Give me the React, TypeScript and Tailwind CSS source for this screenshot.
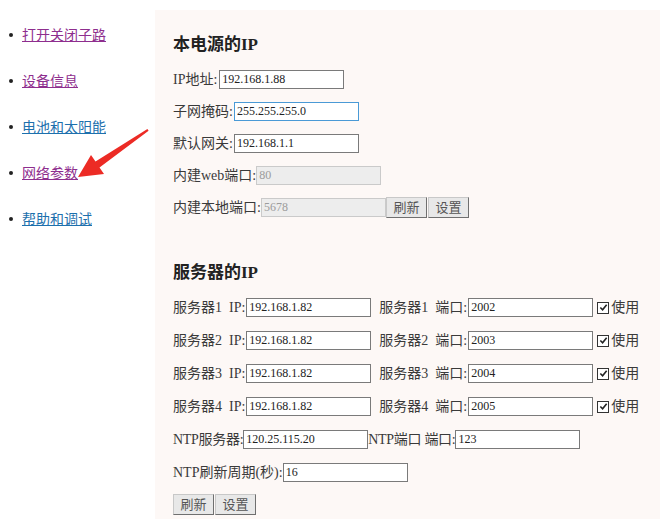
import React from "react";

const font = "font-['Liberation_Serif','Noto_Sans_CJK_SC',serif]";

const navItems = [
  { label: "打开关闭子路", visited: true },
  { label: "设备信息", visited: true },
  { label: "电池和太阳能", visited: false },
  { label: "网络参数", visited: true },
  { label: "帮助和调试", visited: false },
];

const servers = [
  { n: 1, ip: "192.168.1.82", port: "2002" },
  { n: 2, ip: "192.168.1.82", port: "2003" },
  { n: 3, ip: "192.168.1.82", port: "2004" },
  { n: 4, ip: "192.168.1.82", port: "2005" },
];

interface FieldProps {
  value: string;
  disabled?: boolean;
  focused?: boolean;
}

const Field = ({ value, disabled, focused }: FieldProps) => {
  let tone = "border-[#7a7a7a] bg-white text-[#222]";
  if (disabled) tone = "border-[#cacaca] bg-[#ededed] text-[#9c9c9c]";
  if (focused) tone = "border-[#4a9ad6] bg-white text-[#222]";
  return (
    <input
      defaultValue={value}
      disabled={disabled}
      className={`h-[19px] w-[125px] border px-[2px] text-[12px] outline-none ${tone} ${font}`}
    />
  );
};

const Btn = ({ label }: { label: string }) => (
  <button className="h-[21px] w-[41px] border border-t-[#c8c8c8] border-l-[#c8c8c8] border-r-[#6f6f6f] border-b-[#6f6f6f] bg-[#e8e8e8] text-[13px] text-[#555]">
    {label}
  </button>
);

const Check = () => (
  <span className="flex items-center gap-[2px]">
    <span className="flex h-[12px] w-[12px] items-center justify-center border border-[#333] bg-white">
      <svg viewBox="0 0 10 10" className="h-[9px] w-[9px]">
        <path d="M1.5 5 L4 7.5 L8.5 2" fill="none" stroke="#222" strokeWidth="1.8" />
      </svg>
    </span>
    <span>使用</span>
  </span>
);

const App = () => {
  return (
    <div className={`relative flex min-h-screen bg-white text-[14px] text-[#3a3a3a] ${font}`}>
      {/* left nav */}
      <ul className="flex w-[155px] shrink-0 flex-col gap-[26px] pt-[25px]">
        {navItems.map((item) => (
          <li key={item.label} className="flex h-[20px] items-center">
            <span className="ml-[9px] mr-[9px] h-[4px] w-[4px] rounded-full bg-[#222]" />
            <a
              href="#"
              className={`underline ${item.visited ? "text-[#8e2e8e]" : "text-[#1d70ad]"}`}
            >
              {item.label}
            </a>
          </li>
        ))}
      </ul>

      {/* main panel */}
      <div className="mt-[10px] flex-1 bg-[#fdf8f6] pl-[18px] pb-[20px]">
        <h2 className="mt-[19px] flex h-[32px] items-center text-[17px] font-bold text-[#222]">本电源的IP</h2>
        <div className="mt-[2px] flex flex-col">
          <div className="flex h-[32px] items-center">
            <span className="mr-[2px]">IP地址:</span>
            <Field value="192.168.1.88" />
          </div>
          <div className="flex h-[32px] items-center">
            <span className="mr-[1px]">子网掩码:</span>
            <Field value="255.255.255.0" focused />
          </div>
          <div className="flex h-[32px] items-center">
            <span className="mr-[1px]">默认网关:</span>
            <Field value="192.168.1.1" />
          </div>
          <div className="flex h-[32px] items-center">
            <span>内建web端口:</span>
            <Field value="80" disabled />
          </div>
          <div className="flex h-[32px] items-center">
            <span>内建本地端口:</span>
            <Field value="5678" disabled />
            <Btn label="刷新" />
            <span className="w-[1px]" />
            <Btn label="设置" />
          </div>
        </div>

        <h2 className="mt-[34px] flex h-[32px] items-center text-[17px] font-bold text-[#222]">服务器的IP</h2>
        <div className="mt-[2px] flex flex-col">
          {servers.map((s) => (
            <div key={s.n} className="flex h-[33px] items-center">
              <span className="mr-[1px]">服务器{s.n}&nbsp;&nbsp;IP:</span>
              <Field value={s.ip} />
              <span className="ml-[8px] mr-[1px]">服务器{s.n}&nbsp;&nbsp;端口:</span>
              <Field value={s.port} />
              <span className="ml-[4px]">
                <Check />
              </span>
            </div>
          ))}
          <div className="flex h-[33px] items-center">
            <span className="tracking-[-0.3px]">NTP服务器:</span>
            <Field value="120.25.115.20" />
            <span className="tracking-[-0.3px]">NTP端口&nbsp;端口:</span>
            <Field value="123" />
          </div>
          <div className="flex h-[33px] items-center">
            <span>NTP刷新周期(秒):</span>
            <Field value="16" />
          </div>
        </div>
        <div className="mt-[5px] flex gap-[1px]">
          <Btn label="刷新" />
          <Btn label="设置" />
        </div>
      </div>

      {/* annotation arrow */}
      <svg className="pointer-events-none absolute left-0 top-0" width="160" height="200" viewBox="0 0 160 200">
        <polygon
          points="78,177 91,155 95.5,161.5 147.4,129 148.6,130.8 99.5,167.5 104,174"
          fill="#ec2b25"
        />
      </svg>
    </div>
  );
};

export default App;
